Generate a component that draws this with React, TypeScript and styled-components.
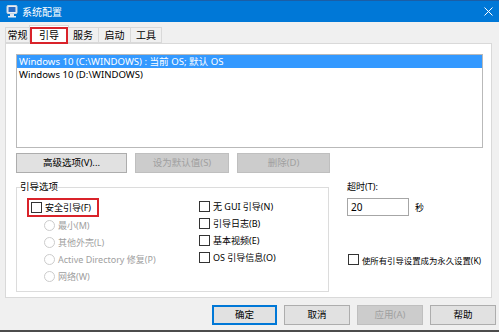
import React from 'react';
import styled, { createGlobalStyle } from 'styled-components';

const GlobalStyle = createGlobalStyle`
  html, body {
    margin: 0;
    padding: 0;
  }
  body {
    font-family: "Noto Sans", "Noto Sans CJK SC", sans-serif;
    font-size: 9px;
    color: #000;
  }
`;

const Window = styled.div`
  width: 499px;
  height: 332px;
  box-sizing: border-box;
  display: flex;
  flex-direction: column;
  background: #f0f0f0;
  border-bottom: 2px solid #4c4c4c;
  overflow: hidden;
`;

const TitleBar = styled.div`
  height: 22px;
  box-sizing: border-box;
  background: #0078d7;
  border-top: 1px solid #1b5ea6;
  display: flex;
  align-items: center;
  padding: 0 6px;
  color: #fff;
  gap: 4px;
  font-size: 10px;
`;

const TitleText = styled.span`
  flex: 1;
  line-height: 1;
`;

const Body = styled.div`
  flex: 1;
  display: flex;
  flex-direction: column;
  padding: 3px 7px 0 5px;
`;

const TabStrip = styled.div`
  display: flex;
  align-items: flex-end;
  height: 18px;
  position: relative;
  z-index: 1;
  font-size: 10px;
`;

const Tab = styled.div<{ $active?: boolean; $w: number }>`
  width: ${p => p.$w}px;
  box-sizing: border-box;
  height: ${p => (p.$active ? 19 : 16)}px;
  margin: ${p => (p.$active ? '0 -1px -1px' : '0')};
  display: flex;
  align-items: center;
  justify-content: center;
  background: ${p => (p.$active ? '#fff' : '#f0f0f0')};
  border: 1px solid #d9d9d9;
  border-bottom: ${p => (p.$active ? 'none' : '1px solid #d9d9d9')};
  border-left: ${p => (p.$active ? '1px solid #d9d9d9' : 'none')};
  line-height: 1;
  white-space: nowrap;
  &:first-child {
    border-left: 1px solid #d9d9d9;
  }
`;

const Mark = styled.span`
  display: flex;
  align-items: center;
  gap: 3px;
  border: 2px solid #d9232a;
  box-sizing: border-box;
`;

const TabMark = styled(Mark)`
  width: 38px;
  height: 17px;
  justify-content: center;
`;

const Panel = styled.div`
  height: 255px;
  box-sizing: border-box;
  background: #fff;
  border: 1px solid #d9d9d9;
  padding: 10px 8px 0 10px;
  display: flex;
  flex-direction: column;
`;

const ListBox = styled.div`
  height: 94px;
  box-sizing: border-box;
  border: 1px solid #b9b9b9;
  font-size: 9.6px;
`;

const ListItem = styled.div<{ $selected?: boolean }>`
  height: 13px;
  line-height: 13px;
  padding-left: 2px;
  white-space: nowrap;
  overflow: hidden;
  background: ${p => (p.$selected ? '#3399ff' : 'transparent')};
  color: ${p => (p.$selected ? '#fff' : '#000')};
`;

const ButtonRow = styled.div`
  display: flex;
  gap: 8px;
  margin-top: 5px;
`;

const Button = styled.button<{ $w: number; $default?: boolean }>`
  width: ${p => p.$w}px;
  height: 20px;
  box-sizing: border-box;
  font: inherit;
  font-size: 9.5px;
  line-height: 1;
  padding: 0;
  background: ${p => (p.disabled ? '#cccccc' : '#e1e1e1')};
  color: ${p => (p.disabled ? '#a0a0a0' : '#000')};
  border: 1px solid ${p => (p.$default ? '#0078d7' : p.disabled ? '#bfbfbf' : '#adadad')};
  box-shadow: ${p => (p.$default ? 'inset 0 0 0 1px #0078d7' : 'none')};
`;

const Lower = styled.div`
  display: flex;
  gap: 18px;
  margin-top: 7px;
`;

const Group = styled.fieldset`
  margin: 0;
  width: 313px;
  flex-shrink: 0;
  box-sizing: border-box;
  border: 1px solid #dcdcdc;
  padding: 4px 0 6px 3px;
`;

const Legend = styled.legend`
  padding: 0;
  line-height: 14px;
  font-size: 9.5px;
`;

const GroupGrid = styled.div`
  display: grid;
  grid-template-columns: 172px 1fr;
  padding-left: 7px;
`;

const Column = styled.div`
  display: flex;
  flex-direction: column;
`;

const Row = styled.div<{ $indent?: number; $disabled?: boolean }>`
  height: 17px;
  display: flex;
  align-items: center;
  gap: 3px;
  padding-left: ${p => p.$indent ?? 0}px;
  color: ${p => (p.$disabled ? '#a0a0a0' : '#000')};
  white-space: nowrap;
`;

const SafeMark = styled(Mark)`
  height: 19px;
  padding: 0 6px 0 2px;
  align-self: flex-start;
`;

const Box = styled.span`
  width: 11px;
  height: 11px;
  box-sizing: border-box;
  border: 1px solid #333;
  background: #fff;
  flex-shrink: 0;
`;

const Radio = styled.span`
  width: 11px;
  height: 11px;
  box-sizing: border-box;
  border: 1px solid #cccccc;
  border-radius: 50%;
  flex-shrink: 0;
`;

const Side = styled.div`
  display: flex;
  flex-direction: column;
  min-width: 0;
`;

const SideLabel = styled.div`
  line-height: 14px;
`;

const InputRow = styled.div`
  display: flex;
  align-items: center;
  gap: 6px;
  margin-top: 4px;
`;

const Input = styled.div`
  width: 62px;
  height: 18px;
  box-sizing: border-box;
  border: 1px solid #a6a6a6;
  padding-left: 3px;
  line-height: 16px;
  font-size: 10px;
`;

const Permanent = styled(Row)`
  margin-top: 35px;
  padding-left: 1px;
  font-size: 8.4px;
`;

const Footer = styled.div`
  display: flex;
  justify-content: flex-end;
  gap: 7px;
  padding-top: 7px;
  margin-right: -4px;
`;

const AppIcon = () => (
  <svg width="12" height="13" viewBox="0 0 12 13">
    <rect x="1" y="0.5" width="10" height="8" rx="1" fill="#e8eef5" stroke="#c9d6e3" />
    <rect x="2.5" y="2" width="7" height="5" fill="#2b6cc4" />
    <rect x="4" y="9" width="4" height="2" fill="#dfe7f0" />
    <rect x="2" y="11" width="8" height="1.5" fill="#e8eef5" />
  </svg>
);

const CloseIcon = () => (
  <svg width="9" height="9" viewBox="0 0 9 9">
    <path d="M0.5 0.5 L8.5 8.5 M8.5 0.5 L0.5 8.5" stroke="#fff" strokeWidth="1" />
  </svg>
);

const App = () => {
  return (
    <>
      <GlobalStyle />
      <Window>
        <TitleBar>
          <AppIcon />
          <TitleText>系统配置</TitleText>
          <CloseIcon />
        </TitleBar>
        <Body>
          <TabStrip>
            <Tab $w={25}>常规</Tab>
            <Tab $active $w={40}>
              <TabMark>引导</TabMark>
            </Tab>
            <Tab $w={31}>服务</Tab>
            <Tab $w={32}>启动</Tab>
            <Tab $w={31}>工具</Tab>
          </TabStrip>
          <Panel>
            <ListBox>
              <ListItem $selected>Windows 10 (C:\WINDOWS) : 当前 OS; 默认 OS</ListItem>
              <ListItem>Windows 10 (D:\WINDOWS)</ListItem>
            </ListBox>
            <ButtonRow>
              <Button $w={111}>高级选项(V)...</Button>
              <Button $w={94} disabled>设为默认值(S)</Button>
              <Button $w={93} disabled>删除(D)</Button>
            </ButtonRow>
            <Lower>
              <Group>
                <Legend>引导选项</Legend>
                <GroupGrid>
                  <Column>
                    <SafeMark>
                      <Box />
                      安全引导(F)
                    </SafeMark>
                    <Row $indent={17} $disabled><Radio />最小(M)</Row>
                    <Row $indent={17} $disabled><Radio />其他外壳(L)</Row>
                    <Row $indent={17} $disabled><Radio />Active Directory 修复(P)</Row>
                    <Row $indent={17} $disabled><Radio />网络(W)</Row>
                  </Column>
                  <Column>
                    <Row><Box />无 GUI 引导(N)</Row>
                    <Row><Box />引导日志(B)</Row>
                    <Row><Box />基本视频(E)</Row>
                    <Row><Box />OS 引导信息(O)</Row>
                  </Column>
                </GroupGrid>
              </Group>
              <Side>
                <SideLabel>超时(T):</SideLabel>
                <InputRow>
                  <Input>20</Input>
                  秒
                </InputRow>
                <Permanent><Box />使所有引导设置成为永久设置(K)</Permanent>
              </Side>
            </Lower>
          </Panel>
          <Footer>
            <Button $w={65} $default>确定</Button>
            <Button $w={66}>取消</Button>
            <Button $w={66} disabled>应用(A)</Button>
            <Button $w={66}>帮助</Button>
          </Footer>
        </Body>
      </Window>
    </>
  );
};

export default App;
